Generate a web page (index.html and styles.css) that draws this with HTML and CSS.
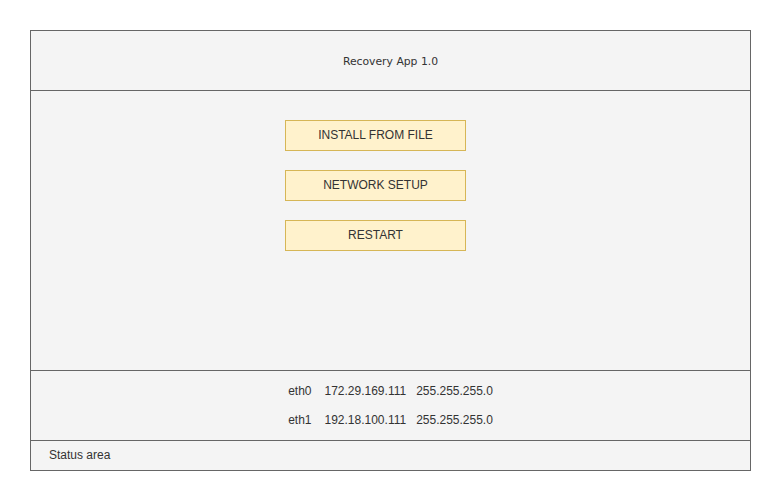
FILE: index.html
```html
<!DOCTYPE html>
<html>
<head>
<meta charset="utf-8">
<link rel="stylesheet" href="styles.css">
</head>
<body>
<div class="frame">
  <div class="header">Recovery App 1.0</div>
  <div class="main">
    <div class="btn">INSTALL FROM FILE</div>
    <div class="btn">NETWORK SETUP</div>
    <div class="btn">RESTART</div>
  </div>
  <div class="net">
    <div class="row"><span class="if">eth0</span><span class="ip">172.29.169.111</span><span class="mask">255.255.255.0</span></div>
    <div class="row"><span class="if">eth1</span><span class="ip">192.18.100.111</span><span class="mask">255.255.255.0</span></div>
  </div>
  <div class="status">Status area</div>
</div>
</body>
</html>
```

FILE: styles.css
```css
html, body {
  margin: 0;
  padding: 0;
  background: #ffffff;
}
body {
  padding: 30px;
  font-family: "Liberation Sans", Arial, sans-serif;
  font-size: 12px;
  color: #333333;
}
.frame {
  width: 721px;
  box-sizing: border-box;
  border: 1px solid #666666;
  background: #f4f4f4;
}
.header {
  height: 60px;
  box-sizing: border-box;
  border-bottom: 1px solid #666666;
  padding-top: 1px;
  display: flex;
  align-items: center;
  justify-content: center;
  font-family: "DejaVu Sans", sans-serif;
  font-size: 10.8px;
}
.main {
  height: 280px;
  box-sizing: border-box;
  border-bottom: 1px solid #666666;
  padding-top: 29px;
  padding-left: 254px;
  display: flex;
  flex-direction: column;
  gap: 19px;
}
.btn {
  width: 181px;
  height: 31px;
  box-sizing: border-box;
  border: 1px solid #d6b656;
  background: #fff2cc;
  padding-bottom: 2px;
  display: flex;
  align-items: center;
  justify-content: center;
}
.net {
  height: 70px;
  box-sizing: border-box;
  border-bottom: 1px solid #666666;
  display: flex;
  flex-direction: column;
  align-items: center;
  padding-top: 11px;
  gap: 11px;
}
.row {
  display: flex;
  line-height: 18px;
}
.if {
  margin-right: 13px;
}
.ip {
  margin-right: 10px;
}
.status {
  height: 29px;
  box-sizing: border-box;
  padding-bottom: 2px;
  display: flex;
  align-items: center;
  padding-left: 18px;
}
```
